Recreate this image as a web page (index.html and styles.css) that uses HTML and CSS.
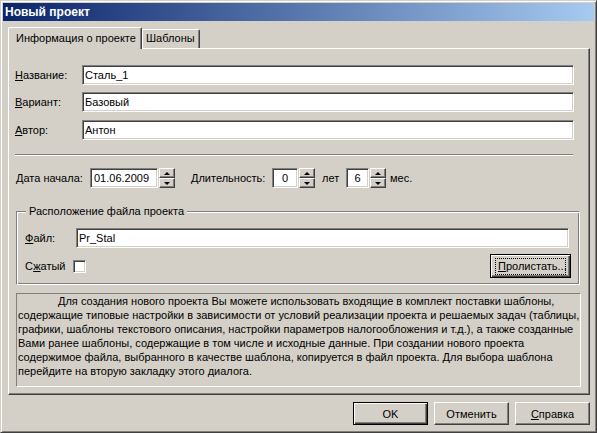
FILE: index.html
```html
<!DOCTYPE html>
<html lang="ru">
<head>
<meta charset="utf-8">
<title>Новый проект</title>
<link rel="stylesheet" href="styles.css">
</head>
<body>
<div class="window">
  <div class="titlebar">Новый проект</div>
  <div class="content">
    <div class="tabs">
      <div class="tab active">Информация о проекте</div>
      <div class="tab">Шаблоны</div>
    </div>
    <div class="panel">
      <div class="row">
        <span class="lbl"><u>Н</u>азвание:</span>
        <div class="edit">Сталь_1</div>
      </div>
      <div class="row row2">
        <span class="lbl"><u>В</u>ариант:</span>
        <div class="edit">Базовый</div>
      </div>
      <div class="row row3">
        <span class="lbl"><u>А</u>втор:</span>
        <div class="edit">Антон</div>
      </div>
      <div class="sep"></div>
      <div class="daterow">
        <span class="lbl-date"><u>Д</u>ата начала:</span>
        <div class="edit date">01.06.2009</div>
        <div class="spin"><div class="sb up"><i></i></div><div class="sb down"><i></i></div></div>
        <span class="lbl-dur"><u>Д</u>лительность:</span>
        <div class="edit num w26">0</div>
        <div class="spin"><div class="sb up"><i></i></div><div class="sb down"><i></i></div></div>
        <span class="lbl-let">лет</span>
        <div class="edit num w23">6</div>
        <div class="spin"><div class="sb up"><i></i></div><div class="sb down"><i></i></div></div>
        <span class="lbl-mes">мес.</span>
      </div>
      <div class="group">
        <span class="legend">Расположение файла проекта</span>
        <div class="frow">
          <span class="lbl-file"><u>Ф</u>айл:</span>
          <div class="edit">Pr_Stal</div>
        </div>
        <div class="crow">
          <span class="lbl-chk">С<u>ж</u>атый</span>
          <span class="check"></span>
          <span class="spacer"></span>
          <div class="btn default browse"><span class="focus"><u>П</u>ролистать...</span></div>
        </div>
      </div>
      <div class="desc">
        <div class="line first">Для создания нового проекта Вы можете использовать входящие в комплект поставки шаблоны,</div>
        <div class="line">содержащие типовые настройки в зависимости от условий реализации проекта и решаемых задач (таблицы,</div>
        <div class="line">графики, шаблоны текстового описания, настройки параметров налогообложения и т.д.), а также созданные</div>
        <div class="line">Вами ранее шаблоны, содержащие в том числе и исходные данные. При создании нового проекта</div>
        <div class="line">содержимое файла, выбранного в качестве шаблона, копируется в файл проекта. Для выбора шаблона</div>
        <div class="line">перейдите на вторую закладку этого диалога.</div>
      </div>
    </div>
    <div class="buttons">
      <div class="btn default">OK</div>
      <div class="btn">Отменить</div>
      <div class="btn"><u>С</u>правка</div>
    </div>
  </div>
</div>
</body>
</html>
```
FILE: styles.css
```css
* { box-sizing: border-box; }
html, body { margin: 0; padding: 0; background: #d4d0c8; }
body { font-family: "Liberation Sans", Arial, sans-serif; font-size: 11px; color: #000; }
u { text-decoration: underline; text-underline-offset: 1px; }

.window {
  width: 597px; height: 433px;
  background: #d4d0c8;
  border: 1px solid; border-color: #d4d0c8 #404040 #404040 #d4d0c8;
  box-shadow: inset 1px 1px #fff, inset -1px -1px #808080;
  padding: 2px;
}
.titlebar {
  height: 18px; line-height: 18px;
  background: linear-gradient(to right, #0a246a, #a6caf0);
  color: #fff; font-weight: bold; font-size: 12px;
  padding-left: 2px;
}
.content { padding: 6px 4px 0 5px; }

.tabs { display: flex; align-items: flex-end; height: 21px; position: relative; z-index: 2; }
.tab {
  height: 19px; line-height: 17px;
  padding: 0 6px;
  background: #d4d0c8;
  border-top: 1px solid #fff; border-left: 1px solid #fff;
  border-right: 1px solid #404040;
  box-shadow: inset -1px 0 #808080;
  border-radius: 2px 2px 0 0;
  font-size: 11px;
  white-space: nowrap;
}
.tab.active {
  height: 22px; line-height: 20px;
  width: 134px; padding-left: 7px;
  margin-bottom: -1px;
}
.tab:not(.active) { width: 58px; padding-left: 3px; }

.panel {
  height: 347px;
  border: 1px solid; border-color: #fff #404040 #404040 #fff;
  box-shadow: inset -1px -1px #808080;
  padding: 16px 15px 0 6px;
}
.row { display: flex; align-items: center; height: 20px; }
.row2 { margin-top: 7px; }
.row3 { margin-top: 8px; }
.lbl { width: 67px; }

.edit {
  flex: 1;
  height: 20px; line-height: 16px;
  background: #fff;
  border: 1px solid; border-color: #808080 #fff #fff #808080;
  box-shadow: inset 1px 1px #404040, inset -1px -1px #d4d0c8;
  padding: 1px 0 0 2px;
  white-space: nowrap; overflow: hidden;
}

.sep { height: 2px; margin: 14px 0 0 0; width: 558px; border-top: 1px solid #808080; border-bottom: 1px solid #fff; }

.daterow { display: flex; align-items: center; height: 20px; margin-top: 12px; margin-left: 1px; }
.lbl-date { width: 74px; }
.edit.date { flex: none; width: 68px; padding-left: 3px; }
.edit.num { flex: none; text-align: center; padding-left: 0; }
.w26 { width: 26px; }
.w23 { width: 23px; }
.lbl-dur { width: 81px; margin-left: 16px; }
.lbl-let { width: 31px; padding-left: 7px; }
.lbl-mes { margin-left: 4px; }

.spin { width: 16px; height: 20px; display: flex; flex-direction: column; margin-left: 1px; }
.sb {
  flex: 1;
  background: #d4d0c8;
  border: 1px solid; border-color: #fff #404040 #404040 #fff;
  box-shadow: inset -1px -1px #808080;
  display: flex; align-items: center; justify-content: center;
}
.sb i { width: 0; height: 0; border-left: 3px solid transparent; border-right: 3px solid transparent; }
.up i { border-bottom: 3px solid #000; }
.down i { border-top: 3px solid #000; }

.group {
  position: relative;
  margin: 23px 0 0 1px;
  width: 564px; height: 74px;
  border: 1px solid; border-color: #808080 #fff #fff #808080;
  box-shadow: inset 1px 1px #fff, inset -1px -1px #808080;
  padding: 16px 10px 0 8px;
}
.legend {
  position: absolute; top: -8px; left: 9px;
  background: #d4d0c8; padding: 0 3px;
  line-height: 14px;
}
.frow { display: flex; align-items: center; height: 20px; }
.lbl-file { width: 51px; }
.crow { display: flex; align-items: center; height: 24px; margin-top: 6px; }
.lbl-chk { width: 48px; }
.check {
  width: 13px; height: 13px; background: #fff;
  border: 1px solid; border-color: #808080 #fff #fff #808080;
  box-shadow: inset 1px 1px #404040, inset -1px -1px #d4d0c8;
}
.spacer { flex: 1; }

.btn {
  width: 75px; height: 23px;
  display: flex; align-items: center; justify-content: center;
  background: #d4d0c8;
  border: 1px solid; border-color: #fff #404040 #404040 #fff;
  box-shadow: inset -1px -1px #808080;
}
.btn.default {
  border: 1px solid #000;
  box-shadow: inset 1px 1px #fff, inset -1px -1px #404040, inset -2px -2px #808080;
}
.browse { width: 81px; height: 24px; margin-right: -2px; }
.focus { border: 1px dotted #000; padding: 1px 2px; line-height: 13px; width: 71px; text-align: left; }

.desc {
  margin: 8px 0 0 1px;
  width: 565px; height: 94px;
  border: 1px solid; border-color: #808080 #fff #fff #808080;
  padding: 0 0 0 1px;
}
.line { line-height: 14px; white-space: nowrap; }
.line.first { padding-left: 40px; }

.buttons { display: flex; justify-content: flex-end; gap: 6px; margin-top: 7px; }
```
